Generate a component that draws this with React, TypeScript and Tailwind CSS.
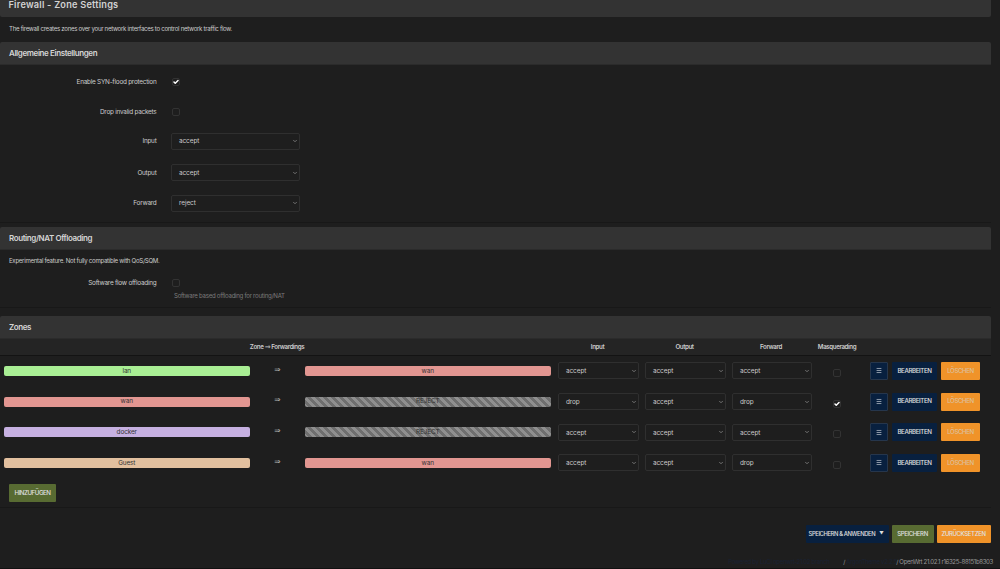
import React from 'react';
import { Check, ChevronDown, Menu } from 'lucide-react';

interface ForwardTarget {
    name: string;
    className: string;
}

interface Zone {
    name: string;
    className: string;
    target: ForwardTarget;
    input: string;
    output: string;
    forward: string;
    masq: boolean;
}

const WAN: ForwardTarget = { name: 'wan', className: 'bg-[#e29691]' };
const REJECT: ForwardTarget = {
    name: 'REJECT',
    className: 'bg-[repeating-linear-gradient(45deg,#8f8f8f_0px,#8f8f8f_2.8px,#6f6f6f_2.8px,#6f6f6f_5.6px)]',
};

const ZONES: Zone[] = [
    { name: 'lan', className: 'bg-[#a9ee94]', target: WAN, input: 'accept', output: 'accept', forward: 'accept', masq: false },
    { name: 'wan', className: 'bg-[#e29691]', target: REJECT, input: 'drop', output: 'accept', forward: 'drop', masq: true },
    { name: 'docker', className: 'bg-[#c6b0e1]', target: REJECT, input: 'accept', output: 'accept', forward: 'accept', masq: false },
    { name: 'Guest', className: 'bg-[#e2c09f]', target: WAN, input: 'accept', output: 'accept', forward: 'drop', masq: false },
];

function Checkbox({ checked = false }: { checked?: boolean }) {
    return (
        <span className="flex h-[8px] w-[8px] items-center justify-center rounded-[2px] border border-[#333333]">
            {checked && <Check className="h-[6px] w-[6px] shrink-0 text-white" strokeWidth={6} />}
        </span>
    );
}

function Select({ value, className }: { value: string; className: string }) {
    return (
        <div className={`flex h-[17px] items-center justify-between rounded-[2px] border border-[#2f2f2f] pl-[7px] pr-[1px] ${className}`}>
            <span className="pt-px text-[6.4px] tracking-[-0.06px] text-[#cccccc]">{value}</span>
            <ChevronDown className="h-[6px] w-[6px] text-[#8c8c8c]" strokeWidth={3} />
        </div>
    );
}

function SectionTitle({ children }: { children: React.ReactNode }) {
    return (
        <h3 className="flex h-[23px] items-center rounded-t-[2px] border-b border-[#2b2b2b] bg-[#333333] pl-[9px] text-[8px] font-semibold tracking-[-0.4px] text-[#d6d6d6]">
            {children}
        </h3>
    );
}

function FormRow({ label, className, children }: { label: string; className: string; children: React.ReactNode }) {
    return (
        <div className={`flex items-center ${className}`}>
            <label className="w-[156.5px] pt-px text-right text-[6.4px] tracking-[-0.24px]">{label}</label>
            {children}
        </div>
    );
}

function ZoneBadge({ name, className }: ForwardTarget) {
    return (
        <div className={`flex h-[10px] w-[246.5px] items-center justify-center rounded-[2px] text-[6.4px] text-[#333333] ${className}`}>
            {name}
        </div>
    );
}

function ZoneRow({ zone }: { zone: Zone }) {
    return (
        <div className="flex h-[30.7px] items-center pl-[3.5px]">
            <ZoneBadge name={zone.name} className={zone.className} />
            <span className="w-[54.5px] pb-[3px] text-center font-['DejaVu_Sans',sans-serif] text-[7.5px] text-[#bbbbbb]">⇒</span>
            <ZoneBadge name={zone.target.name} className={zone.target.className} />
            <Select value={zone.input} className="ml-[7px] w-[81px]" />
            <Select value={zone.output} className="ml-[6px] w-[81px]" />
            <Select value={zone.forward} className="ml-[6px] w-[80px]" />
            <div className="ml-[21px] pt-[4px]">
                <Checkbox checked={zone.masq} />
            </div>
            <button className="ml-[29px] flex h-[18px] w-[18px] items-center justify-center rounded-[1px] border border-[#26364c] bg-[#08203f] text-[#aab3bf]">
                <Menu className="h-[7px] w-[6px]" strokeWidth={3} preserveAspectRatio="none" />
            </button>
            <button className="ml-[4px] h-[18px] w-[45px] rounded-[1px] bg-[#08203f] text-[6.2px] font-medium tracking-[-0.4px] text-[#e0e0e0]">
                BEARBEITEN
            </button>
            <button className="ml-[4px] h-[18px] w-[39px] rounded-[1px] bg-[#f09329] text-[6.2px] font-medium tracking-[-0.45px] text-[#dcc09c]">
                LÖSCHEN
            </button>
        </div>
    );
}

export default function App() {
    return (
        <div className="h-[569px] w-full overflow-hidden border-b border-[#111111] bg-[#1e1e1e] font-['Inter','Liberation_Sans',sans-serif] text-[6.4px] leading-none tracking-[-0.1px] text-[#cccccc]">
            <main className="w-[991px]">
                <h2 className="flex h-[17px] items-start rounded-b-[2px] bg-[#333333] pl-[8.5px] text-[9.2px] font-semibold tracking-[0.22px] text-[#d2d2d2]">
                    Firewall - Zone Settings
                </h2>
                <p className="flex h-[25px] items-center pl-[9px] text-[6.1px] tracking-[-0.29px]">
                    The firewall creates zones over your network interfaces to control network traffic flow.
                </p>

                <section className="h-[181px] border-b border-[#181818]">
                    <SectionTitle>Allgemeine Einstellungen</SectionTitle>
                    <FormRow label="Enable SYN-flood protection" className="h-[34px]">
                        <div className="ml-[15.5px]"><Checkbox checked /></div>
                    </FormRow>
                    <FormRow label="Drop invalid packets" className="h-[26px]">
                        <div className="ml-[15.5px]"><Checkbox /></div>
                    </FormRow>
                    <FormRow label="Input" className="h-[32px]">
                        <Select value="accept" className="ml-[14.5px] w-[129px]" />
                    </FormRow>
                    <FormRow label="Output" className="h-[31px]">
                        <Select value="accept" className="ml-[14.5px] w-[129px]" />
                    </FormRow>
                    <FormRow label="Forward" className="h-[30px]">
                        <Select value="reject" className="ml-[14.5px] w-[129px]" />
                    </FormRow>
                </section>

                <section className="mt-[4px] h-[81px] border-b border-[#181818]">
                    <SectionTitle>Routing/NAT Offloading</SectionTitle>
                    <p className="flex h-[23px] items-center pl-[9px] text-[6.1px] tracking-[-0.29px]">
                        Experimental feature. Not fully compatible with QoS/SQM.
                    </p>
                    <FormRow label="Software flow offloading" className="h-[20px]">
                        <div className="ml-[15.5px]"><Checkbox /></div>
                    </FormRow>
                    <p className="pl-[174px] text-[6.1px] tracking-[-0.28px] text-[#7b7b7b]">Software based offloading for routing/NAT</p>
                </section>

                <section className="mt-[8px] h-[192px] border-b border-[#181818]">
                    <SectionTitle>Zones</SectionTitle>
                    <div className="flex h-[16.5px] items-center border-b border-[#131313] bg-[#242424] text-center text-[6.2px] font-semibold tracking-[-0.4px]">
                        <span className="w-[554px]">
                            Zone <span className="font-['DejaVu_Sans',sans-serif] text-[7px] leading-[0] font-normal">⇒</span> Forwardings
                        </span>
                        <span className="w-[87px]">Input</span>
                        <span className="w-[87px]">Output</span>
                        <span className="w-[86px]">Forward</span>
                        <span className="w-[46px]">Masquerading</span>
                    </div>
                    {ZONES.map((zone) => (
                        <ZoneRow key={zone.name} zone={zone} />
                    ))}
                    <button className="mt-[5.5px] ml-[9px] h-[18px] w-[47px] rounded-[1px] bg-[#586b32] text-[6.2px] font-medium tracking-[-0.48px] text-[#e0e0e0]">
                        HINZUFÜGEN
                    </button>
                </section>

                <div className="mt-[17px] flex h-[18px] justify-end gap-[3px] pr-[0.5px] text-[6px] font-medium tracking-[-0.36px] text-[#e0e0e0]">
                    <button className="flex w-[83px] items-center justify-between rounded-[1px] bg-[#08203f] pr-[5px] pl-[3px] whitespace-nowrap">
                        <span className="text-[5.8px]">SPEICHERN &amp; ANWENDEN</span>
                        <span className="pt-px text-[4.4px]">▼</span>
                    </button>
                    <button className="w-[42px] rounded-[1px] bg-[#586b32]">SPEICHERN</button>
                    <button className="w-[54px] rounded-[1px] bg-[#f09329]">ZURÜCKSETZEN</button>
                </div>
            </main>
            <footer className="flex justify-end pt-[16px] pr-[7px] text-[6.1px] tracking-[-0.36px] text-[#999999]">
                <span className="w-[115px] whitespace-nowrap text-[#1a2233]">Powered by LuCI openwrt-21.02 branch</span>
                <span className="w-[53px] whitespace-nowrap">/ <span className="text-[#1a2233]">ArgonTheme v2.2.5</span></span>
                <span>/ OpenWrt 21.02.1 r16325-88151b8303</span>
            </footer>
        </div>
    );
}
